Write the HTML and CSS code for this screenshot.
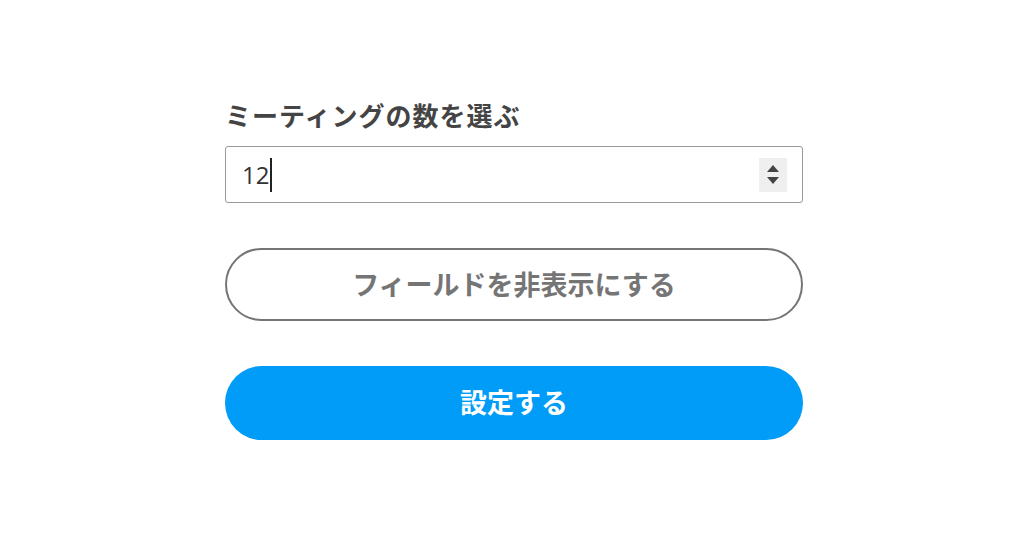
FILE: index.html
```html
<!DOCTYPE html>
<html lang="ja">
<head>
    <meta charset="UTF-8">
    <meta name="viewport" content="width=device-width, initial-scale=1.0">
    <title>ミーティングの数</title>
    <link rel="stylesheet" href="styles.css">
</head>
<body>

    <div class="panel">
        <label class="field-label" for="count">ミーティングの数を選ぶ</label>

        <!-- number field with spinner -->
        <div class="number-field" id="count">
            <span class="value">12</span><span class="caret"></span>
            <div class="spinner">
                <span class="arrow up"></span>
                <span class="arrow down"></span>
            </div>
        </div>

        <button class="btn btn-outline">フィールドを非表示にする</button>
        <button class="btn btn-primary">設定する</button>
    </div>

</body>
</html>
```

FILE: styles.css
```css
* {
    margin: 0;
    padding: 0;
    box-sizing: border-box;
}

body {
    font-family: "Noto Sans CJK JP", "Noto Sans", sans-serif;
    background: #fff;
    padding-top: 98px;
}

.panel {
    width: 578px;
    margin-left: 225px;
    display: flex;
    flex-direction: column;
}

.field-label {
    font-size: 26px;
    font-weight: 700;
    color: #444;
    line-height: 34px;
    letter-spacing: 1px;
}

.number-field {
    margin-top: 14px;
    height: 57px;
    border: 1px solid #9a9a9a;
    border-radius: 3px;
    display: flex;
    align-items: center;
    padding-left: 16px;
    padding-right: 15px;
}

.value {
    font-family: "Open Sans", "Noto Sans", sans-serif;
    font-size: 24px;
    color: #333;
    line-height: 30px;
}

.caret {
    width: 2px;
    height: 34px;
    background: #222;
    margin-left: 1px;
}

.spinner {
    margin-left: auto;
    width: 28px;
    height: 34px;
    background: #efefef;
    display: flex;
    flex-direction: column;
    align-items: center;
    justify-content: center;
    gap: 5px;
}

.arrow {
    width: 0;
    height: 0;
    border-left: 6px solid transparent;
    border-right: 6px solid transparent;
}

.arrow.up {
    border-bottom: 7px solid #444;
}

.arrow.down {
    border-top: 7px solid #444;
}

.btn {
    font-family: "Noto Sans CJK JP", sans-serif;
    font-size: 27px;
    font-weight: 700;
    border-radius: 40px;
    cursor: pointer;
    padding-bottom: 3px;
}

.btn-outline {
    margin-top: 45px;
    height: 73px;
    background: #fff;
    border: 2px solid #757575;
    color: #757575;
}

.btn-primary {
    margin-top: 45px;
    height: 74px;
    background: #009cf7;
    border: none;
    color: #fff;
}
```
